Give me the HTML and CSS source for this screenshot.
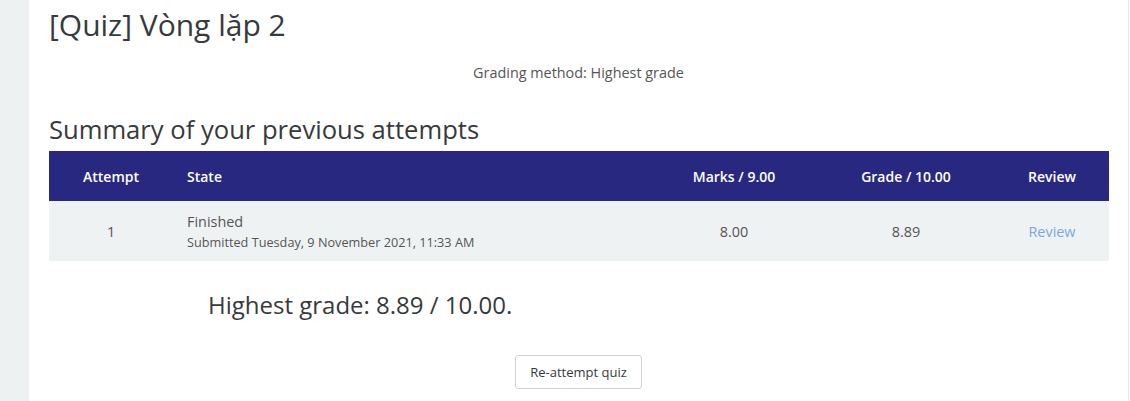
FILE: index.html
```html
<!DOCTYPE html>
<html lang="vi">
<head>
<meta charset="utf-8">
<link rel="stylesheet" href="styles.css">
</head>
<body>
<div class="page">
  <aside class="side"></aside>
  <main class="content">
    <h2 class="title">[Quiz] Vòng lặp 2</h2>
    <p class="method">Grading method: Highest grade</p>
    <h3 class="summary">Summary of your previous attempts</h3>
    <table class="attempts">
      <colgroup>
        <col class="w-att"><col class="w-state"><col class="w-marks"><col class="w-grade"><col class="w-rev">
      </colgroup>
      <thead>
        <tr>
          <th class="c-att">Attempt</th>
          <th class="c-state">State</th>
          <th class="c-num">Marks / 9.00</th>
          <th class="c-num">Grade / 10.00</th>
          <th class="c-num">Review</th>
        </tr>
      </thead>
      <tbody>
        <tr>
          <td class="c-att">1</td>
          <td class="c-state">Finished<span class="sub">Submitted Tuesday, 9 November 2021, 11:33 AM</span></td>
          <td class="c-num">8.00</td>
          <td class="c-num">8.89</td>
          <td class="c-num"><a href="#">Review</a></td>
        </tr>
      </tbody>
    </table>
    <h3 class="highest">Highest grade: 8.89 / 10.00.</h3>
    <div class="actions"><button class="btn">Re-attempt quiz</button></div>
  </main>
</div>
</body>
</html>
```
FILE: styles.css
```css
html, body { margin: 0; padding: 0; }
body {
  font-family: "Open Sans", "Noto Sans", sans-serif;
  color: #373a3c;
  background: #fff;
  width: 1130px;
  height: 401px;
  overflow: hidden;
}
.page { display: flex; height: 401px; }
.side { width: 29px; background: #eef1f2; flex: none; }
.content {
  width: 1100px;
  padding: 0 20px;
  box-sizing: border-box;
  border-right: 1px solid #e8e8e8;
}
.title {
  margin: 0;
  padding-top: 7px;
  font-size: 30px;
  font-weight: 400;
  line-height: 36px;
  color: #373a3c;
}
.method {
  margin: 20px 0 0;
  text-align: center;
  font-size: 14.4px;
  line-height: 20px;
  color: #555;
}
.summary {
  margin: 32px 0 0;
  font-size: 25.6px;
  font-weight: 400;
  line-height: 30px;
}
.attempts {
  width: 1060px;
  table-layout: fixed;
  border-collapse: collapse;
  margin-top: 6px;
}
.w-att { width: 124px; }
.w-state { width: 478px; }
.w-marks { width: 166px; }
.w-grade { width: 178px; }
.w-rev { width: 114px; }
.attempts th {
  background: #292881;
  color: #fff;
  font-weight: 600;
  font-size: 14px;
  height: 50px;
  padding: 0;
}
.attempts td {
  background: #eff2f3;
  height: 60px;
  padding: 0;
  font-size: 14.4px;
  color: #555;
}
.c-att, .c-num { text-align: center; }
.c-state { text-align: left; }
.attempts th.c-state, .attempts td.c-state { padding-left: 14px; }
.attempts td.c-state { line-height: 20px; padding-top: 2px; height: 58px; }
.sub { display: block; font-size: 12.7px; line-height: 21px; }
.c-num a { color: #7aa7e6; text-decoration: none; }
.highest {
  margin: 28px 0 0 159px;
  font-size: 24px;
  font-weight: 400;
  line-height: 32px;
}
.actions { display: flex; justify-content: center; margin-top: 34px; }
.btn {
  font-family: inherit;
  font-size: 13px;
  color: #373a3c;
  background: #fff;
  border: 1px solid #ced4da;
  border-radius: 3px;
  height: 34px;
  padding: 0 14px;
}
```
